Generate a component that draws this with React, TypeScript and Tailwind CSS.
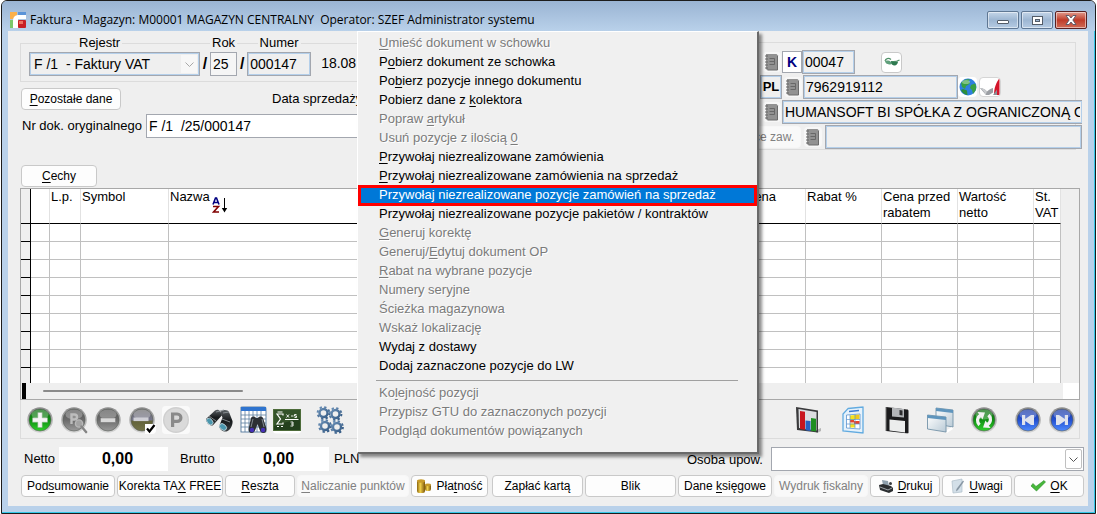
import React from 'react';
import clsx from 'clsx';

type IconProps = { className?: string };

/* "&" marks the access key, as in native menus */
function Mnemonic({ text }: { text: string }) {
  const i = text.indexOf('&');
  if (i < 0) return <>{text}</>;
  return (
    <>
      {text.slice(0, i)}
      <span className="underline underline-offset-2">{text[i + 1]}</span>
      {text.slice(i + 2)}
    </>
  );
}

/* ---------- icons ---------- */

function Gradients() {
  return (
    <svg width="0" height="0" className="absolute" aria-hidden="true">
      <defs>
        <linearGradient id="green" x1="0" y1="0" x2="0" y2="1">
          <stop offset="0" stopColor="#0c6b10" />
          <stop offset="0.5" stopColor="#0f8f12" />
          <stop offset="1" stopColor="#2fd02a" />
        </linearGradient>
        <linearGradient id="gray" x1="0" y1="0" x2="0" y2="1">
          <stop offset="0" stopColor="#565656" />
          <stop offset="0.5" stopColor="#6b6b6b" />
          <stop offset="1" stopColor="#9a9a9a" />
        </linearGradient>
        <linearGradient id="olive" x1="0" y1="0" x2="0" y2="1">
          <stop offset="0" stopColor="#6c6c6c" />
          <stop offset="0.5" stopColor="#76768c" />
          <stop offset="0.55" stopColor="#63633a" />
          <stop offset="1" stopColor="#74744a" />
        </linearGradient>
        <linearGradient id="blue" x1="0" y1="0" x2="0" y2="1">
          <stop offset="0" stopColor="#1b3aa0" />
          <stop offset="0.5" stopColor="#2450cf" />
          <stop offset="1" stopColor="#4d8bff" />
        </linearGradient>
        <linearGradient id="rim" x1="0" y1="0" x2="0" y2="1">
          <stop offset="0" stopColor="#8c8c8c" />
          <stop offset="1" stopColor="#d6d6d6" />
        </linearGradient>
        <linearGradient id="gold" x1="0" y1="0" x2="1" y2="0">
          <stop offset="0" stopColor="#8a6410" />
          <stop offset="0.4" stopColor="#f3d24a" />
          <stop offset="1" stopColor="#7a540a" />
        </linearGradient>
        <linearGradient id="steel" gradientUnits="userSpaceOnUse" x1="-6" y1="-6" x2="6" y2="6">
          <stop offset="0" stopColor="#6f94bb" />
          <stop offset="1" stopColor="#2f557f" />
        </linearGradient>
        <linearGradient id="lens" x1="0" y1="0" x2="0" y2="1">
          <stop offset="0" stopColor="#5b6064" />
          <stop offset="0.5" stopColor="#15181a" />
          <stop offset="1" stopColor="#3b4044" />
        </linearGradient>
        <linearGradient id="pane" x1="0" y1="0" x2="1" y2="1">
          <stop offset="0" stopColor="#ffffff" />
          <stop offset="1" stopColor="#b9cad6" />
        </linearGradient>
      </defs>
    </svg>
  );
}

function Orb({ fill, children }: { fill: string; children?: React.ReactNode }) {
  return (
    <svg viewBox="0 0 28 28" className="size-7">
      <circle cx="14" cy="14" r="12.8" fill="url(#rim)" />
      <circle cx="14" cy="14" r="11" fill={fill} stroke="#5b5f5b" strokeWidth="0.6" />
      <ellipse cx="14" cy="8.5" rx="8.5" ry="5" fill="#fff" opacity="0.28" />
      {children}
    </svg>
  );
}

const AddIcon = () => (
  <Orb fill="url(#green)">
    <path d="M11.8 6.5h4.4v5.3h5.3v4.4h-5.3v5.3h-4.4v-5.3H6.5v-4.4h5.3z" fill="#f4f4f4" stroke="#8bb08b" strokeWidth="0.5" />
  </Orb>
);

const SearchItemIcon = () => (
  <Orb fill="url(#gray)">
    <path d="M11.500 18V8.500h3a2.500 2.500 0 010 5h-3" fill="none" stroke="#bdbdbd" strokeWidth="2.400" />
    <circle cx="19" cy="17.5" r="3.6" fill="#a3a3a3" stroke="#b8b8b8" strokeWidth="1.4" />
    <path d="M21.5 20.5l5 6" stroke="#858585" strokeWidth="2.4" strokeLinecap="round" />
  </Orb>
);

const RemoveIcon = () => (
  <Orb fill="url(#gray)">
    <rect x="6.5" y="12" width="15" height="4.4" fill="#d9d9d9" stroke="#777" strokeWidth="0.5" />
  </Orb>
);

const RemoveCheckedIcon = () => (
  <Orb fill="url(#olive)">
    <rect x="5.5" y="11.5" width="15" height="3.6" fill="#cfcfd6" />
    <rect x="17" y="18" width="11" height="10" fill="#fff" />
    <path d="M19 22.5l2.5 3L26.5 19" fill="none" stroke="#000" strokeWidth="2.2" />
  </Orb>
);

const ParkingIcon = () => (
  <svg viewBox="0 0 28 28" className="size-7">
    <rect width="28" height="28" fill="#fafafa" />
    <circle cx="14" cy="14" r="13" fill="#cfcfcf" />
    <circle cx="14" cy="14" r="11.6" fill="#dadada" />
    <path d="M10.6 21V8h4.6a3.6 3.6 0 010 7.4h-4.6" fill="none" stroke="#8a8a8a" strokeWidth="3.2" />
  </svg>
);

const BinocularsIcon = () => (
  <svg viewBox="0 0 28 28" className="size-7">
    <path d="M1 13L10 4.5c2-1.4 4-.8 5 .8l2 4-9 10c-2 1.300-7-2-7-6.300z" fill="url(#lens)" />
    <path d="M15 6c3-3 8-2.500 9 0l3.500 9c.6 4-2.500 10-6 10.500-4 .5-8-3-7-6l3-8z" fill="url(#lens)" />
    <path d="M11 6l8-2M18 7l6-1M4 10l7 5M17 13l8 3" stroke="#8d9499" strokeWidth="0.9" />
    <ellipse cx="4.800" cy="15.500" rx="2.600" ry="3.900" transform="rotate(-40 4.800 15.500)" fill="#4a96ad" stroke="#c4d6dc" strokeWidth="0.8" />
    <ellipse cx="18" cy="21" rx="2.800" ry="4" transform="rotate(-50 18 21)" fill="#4a96ad" stroke="#c4d6dc" strokeWidth="0.8" />
  </svg>
);

const TableSearchIcon = () => (
  <svg viewBox="0 0 28 28" className="size-7">
    <rect x="2" y="1" width="25" height="25" fill="#fff" stroke="#3c6791" strokeWidth="0.8" />
    <rect x="2" y="1" width="25" height="4" fill="#2f74cf" />
    <path d="M2 9h25M2 13h25M2 17h25M2 21h25M6 5v21M10 5v21M14 5v21M18 5v21M22 5v21" stroke="#5b7f9e" strokeWidth="0.8" />
    <path d="M12 12c1-2 4-2 5 0h2c1-2 4-2 5 0l3 9c1 3 0 6-2.500 6S21 25 20 22l-1.500-4-1.500 4c-1 3-2 5-4.500 5S9 24 10 21z" fill="#2c3034" />
    <path d="M14 13l-2 8M23 13l2 8" stroke="#838a90" />
    <circle cx="13" cy="24" r="2.200" fill="#4530b8" />
    <circle cx="24" cy="24" r="2.200" fill="#4530b8" />
  </svg>
);

const FormulaIcon = () => (
  <svg viewBox="0 0 28 28" className="size-7">
    <rect x="0" y="25" width="28" height="2.500" fill="#fff" />
    <rect x="0.500" y="3.500" width="27" height="21" fill="#23401d" stroke="#4d6b3a" />
    <path d="M1 4h26v8L1 20z" fill="#3f6133" opacity="0.600" />
    <path d="M10 9.500V8H4l3.500 5L4 18h6v-1.500M4 20.500h2M8 20.500h2M4.500 6h5" fill="none" stroke="#fff" strokeWidth="1.200" />
    <path d="M12 13.500h13.500" stroke="#fff" strokeWidth="1.200" />
    <path d="M13.500 8.500l2.500 3m0-3l-2.500 3M18 10h2.500M23.500 8.500h-2v1.500h2v1.500h-2M17.500 16h2.500v4h-2.500M18 18h2" fill="none" stroke="#fff" strokeWidth="0.900" />
  </svg>
);

function Cog({ x, y }: { x: number; y: number }) {
  return (
    <g transform={`translate(${x} ${y})`} fill="none" stroke="url(#steel)">
      <circle r="4" strokeWidth="2.400" />
      <circle r="5.900" strokeWidth="2" strokeDasharray="2.300 2.330" />
    </g>
  );
}

const GearsIcon = () => (
  <svg viewBox="0 0 28 28" className="size-7">
    <Cog x={7.5} y={7} />
    <Cog x={19.5} y={8} />
    <Cog x={9} y={20} />
    <Cog x={21} y={21} />
  </svg>
);

const ChartIcon = () => (
  <svg viewBox="0 0 28 28" className="size-7">
    <path d="M20 25l7-3v3l-4 2z" fill="#b5b5b5" />
    <path d="M2 1l22 3.500v22L3 24z" fill="#3a3a3c" />
    <path d="M4.500 3l18 3v18.500L5 22z" fill="#dcdde0" />
    <path d="M6 5l5 .8v18L6 23z" fill="#c9151e" />
    <path d="M11.500 14.500l5 .5v10l-5-.7z" fill="#2a63c4" />
    <path d="M17 12l5 .7V25.500l-5-.7z" fill="#1f8f22" />
  </svg>
);

const SheetIcon = () => (
  <svg viewBox="0 0 28 28" className="size-7">
    <path d="M10 2.500L25 1v26l-20-2V8z" fill="#e6f2fb" stroke="#62abe0" strokeWidth="1.300" />
    <path d="M8.500 9l13.500-1v15L8.500 22z" fill="#fff" stroke="#5a93cf" strokeWidth="0.800" />
    <path d="M11 5.500l10-1" stroke="#3b7bd0" strokeWidth="1.600" />
    <path d="M12 9.500l5-.5v5h-5zM12 17.500h5v4h-5z" fill="#f7e21c" />
    <path d="M17 9l4.500-.5V13H17z" fill="#f2c81e" />
    <path d="M16 15h5.500v3H16zM12 14h4v2.500h-4z" fill="#e8452a" />
    <path d="M8.500 13.500H22M8.500 18H22M12 9v13M17 8.500V22" stroke="#5a93cf" strokeWidth="0.700" />
  </svg>
);

const SaveIcon = () => (
  <svg viewBox="0 0 28 28" className="size-7">
    <path d="M4 1l21 2.500c1 0 1.500.6 1.500 1.500v22.500L4 25z" fill="#1b1b1d" />
    <path d="M10 1.600l12 1.500v8.500L10 10.500z" fill="#b3b5b8" />
    <path d="M17.500 4l3 .4v5l-3-.4z" fill="#2c2c2e" />
    <path d="M7.500 13.500L23 15v11.500L7.500 24.500z" fill="#eceded" />
    <path d="M4 1v24" stroke="#777" />
  </svg>
);

const WindowsIcon = () => (
  <svg viewBox="0 0 28 28" className="size-7">
    <path d="M10 2l17 2v17L10 18z" fill="url(#pane)" stroke="#7593a8" strokeWidth="0.900" />
    <path d="M10 2l17 2v3L10 5z" fill="#5f95bd" />
    <path d="M1.500 9L20 11v15L1.500 23z" fill="url(#pane)" stroke="#7593a8" strokeWidth="0.900" />
    <path d="M1.500 9L20 11v3L1.500 12z" fill="#5f95bd" />
    <path d="M21 27l6-4-1-2-5 3z" fill="#fff" />
  </svg>
);

const RefreshIcon = () => (
  <Orb fill="url(#green)">
    <path d="M9.500 19c-3-3-2.500-7.500 1-9.500" fill="none" stroke="#f2f2f2" strokeWidth="3.200" />
    <path d="M7.500 6l7.500.5-2.500 7z" fill="#f2f2f2" />
    <path d="M18.500 9c3 3 2.500 7.500-1 9.500" fill="none" stroke="#f2f2f2" strokeWidth="3.200" />
    <path d="M20.500 22l-7.500-.5 2.500-7z" fill="#f2f2f2" />
  </Orb>
);

const FirstIcon = () => (
  <Orb fill="url(#blue)">
    <path d="M8 9h3.200v4L17 9h3v10h-3l-5.800-4v4H8z" fill="#dfe3ec" />
  </Orb>
);

const LastIcon = () => (
  <Orb fill="url(#blue)">
    <path d="M20 9h-3.200v4L11 9H8v10h3l5.800-4v4H20z" fill="#dfe3ec" />
  </Orb>
);

const NotebookIcon = () => (
  <svg viewBox="0 0 16 18" className="h-[18px] w-4">
    <path d="M2 1h10.500L14 2.500V17H3L2 16z" fill="#929292" />
    <path d="M13.500 3v14H3.500" fill="none" stroke="#6c6c6c" />
    <path d="M5.500 5.500h5v6h-5M5.500 8.500h5" fill="none" stroke="#686868" />
    <path d="M1 3h3M1 6h3M1 9h3M1 12h3M1 15h3" stroke="#666" />
  </svg>
);

const GlassesIcon = () => (
  <svg viewBox="0 0 18 12" className="h-3 w-[18px]">
    <path d="M2 5C2.500 2.500 5.500 1.500 8 3.500M8 5.500c3 .5 6 0 8.500-1.500" fill="none" stroke="#4f9068" strokeWidth="1.200" />
    <path d="M2 5c2-.8 4.500-.5 6 1s1 2.500-1 2.500S2 7.500 2 5z" fill="#5f9f7b" />
    <path d="M8 5.500c2 .5 4.500.5 7 0 0 2-1.500 4-3.500 4S8 8 8 5.500z" fill="#2e7a50" />
  </svg>
);

const GlobeIcon = () => (
  <svg viewBox="0 0 18 18" className="size-[18px]">
    <circle cx="9" cy="9" r="8.500" fill="#2f7fe0" />
    <path d="M2 5c2-3 6-4.500 9-3.500l-1.500 2 2 1L9 7l-2 1-1 3-3-2zM12 7l4-1.500c1.500 2 1.500 5 .5 7L14 16l-1-4-2-2z" fill="#39a043" />
    <path d="M4 11l4 1.500L8.500 17C6 17 3 14.500 2 12z" fill="#2d8f3a" />
    <ellipse cx="7" cy="4" rx="4" ry="2" fill="#fff" opacity="0.350" />
  </svg>
);

const RegistryIcon = () => (
  <svg viewBox="0 0 20 18" className="h-[18px] w-5">
    <path d="M0 10c3 0 5 1.500 7 3.500 2-2 4-3 6-3.500v4.500L9 17H6z" fill="#9b9ea3" />
    <path d="M0 10c3 0 5 1.500 7 3.500L5.500 17C4.500 14 2.500 11.500 0 10z" fill="#c9cbce" />
    <path d="M19.500 0v17H14c0-7 2-12 5.500-17z" fill="#d4142a" />
    <path d="M13 17l4-5.500V17z" fill="#8d9095" />
  </svg>
);

const LogoIcon = () => (
  <svg viewBox="0 0 16 16" className="size-4">
    <path d="M0 0h7v3L3 7H0z" fill="#fbb04a" />
    <path d="M8 0h8v3H8z" fill="#5b94d8" />
    <path d="M0 8h3v8H0z" fill="#7bc86c" />
    <path d="M3 16V9c0-4 2-6 6-6h7v4H8v9z" fill="#fff" />
    <rect x="8" y="8" width="8" height="8" rx="1" fill="#c81f25" />
    <rect x="9" y="9" width="4" height="3" fill="#ee6f60" />
  </svg>
);

const SortIcon = () => (
  <svg viewBox="0 0 16 16" className="mt-2 ml-0.5 size-4">
    <path d="M1 7.500L3.500 1h1L7 7.500M2.500 5.500h3" fill="none" stroke="#000080" strokeWidth="1.600" />
    <path d="M1 9.500h5.500L1.500 15H7" fill="none" stroke="#800000" strokeWidth="1.600" />
    <path d="M12.500 1v12" stroke="#000" />
    <path d="M9.800 11h5.400l-2.700 4.500z" fill="#000" />
  </svg>
);

const CoinsIcon = () => (
  <svg viewBox="0 0 16 16" className="size-4">
    <rect x="1" y="2" width="8" height="13" rx="2" fill="url(#gold)" />
    <ellipse cx="5" cy="3" rx="4" ry="1.800" fill="#c79a28" />
    <rect x="9" y="6" width="6" height="7" rx="2" fill="url(#gold)" />
    <ellipse cx="12" cy="6.800" rx="3" ry="1.400" fill="#c79a28" />
  </svg>
);

const PrinterIcon = () => (
  <svg viewBox="0 0 16 14" className="h-3.5 w-4">
    <path d="M4 1l6 1 1 5-6-1z" fill="#8fa0ad" />
    <path d="M1 6l4-1 8 2 2 2v3l-4 2-9-3z" fill="#2b2e31" />
    <path d="M2 8l8 3 4-2" fill="none" stroke="#9fa6ab" />
    <circle cx="12.500" cy="4.500" r="1.500" fill="#3a3d40" />
  </svg>
);

const NoteIcon = () => (
  <svg viewBox="0 0 14 16" className="h-4 w-3.5">
    <path d="M1 3l10-2v13L2 15z" fill="#d3dfe8" stroke="#aebdc9" strokeWidth="0.700" />
    <path d="M13 3.500L7 12l-2 1.500L5.500 11 12 2.500z" fill="#8796a3" />
  </svg>
);

const CheckIcon = () => (
  <svg viewBox="0 0 16 12" className="h-3 w-4">
    <path d="M1 6l2-2.500 3 3L14 .5 15.500 2 6.500 11z" fill="#46b83a" stroke="#2c8a2a" strokeWidth="0.600" />
  </svg>
);

const ChevronIcon = ({ className }: IconProps) => (
  <svg viewBox="0 0 9 5" className={clsx('h-[5px] w-[9px]', className)}>
    <path d="M0.500 0.500l4 4 4-4" fill="none" stroke="currentColor" />
  </svg>
);

/* ---------- controls ---------- */

const field = 'h-6 border border-[#a3a7af] px-0.5 text-sm text-black outline-none';
const locked = 'bg-[#efefef] shadow-[inset_0_0_0_1px_#b4cfea]';

function Button({ label, icon, className, disabled }: { label: string; icon?: React.ReactNode; className?: string; disabled?: boolean }) {
  return (
    <button
      type="button"
      disabled={disabled}
      className={clsx(
        'flex h-[22px] min-w-0 items-center justify-center gap-1 rounded border text-xs whitespace-nowrap',
        disabled ? 'border-[#f7f7f7] bg-[#f9f9f9] text-[#808080]' : 'border-[#c9c9c9] bg-[#fdfdfd]',
        className,
      )}
    >
      {icon}
      <span>
        <Mnemonic text={label} />
      </span>
    </button>
  );
}

function IconButton({ label, children, className }: { label: string; children: React.ReactNode; className?: string }) {
  return (
    <button type="button" aria-label={label} className={clsx('flex items-center justify-center overflow-hidden rounded', className)}>
      {children}
    </button>
  );
}

const NotebookButton = ({ label }: { label: string }) => (
  <IconButton label={label} className="h-5 w-[18px] bg-[#f7f7f7]">
    <NotebookIcon />
  </IconButton>
);

/* ---------- title bar ---------- */

function TitleBar() {
  const btn = 'flex h-[18px] w-8 items-center justify-center rounded-[2px] border shadow-[inset_0_0_0_1px_rgba(255,255,255,0.5)]';
  return (
    <header className="flex h-[30px] items-center bg-gradient-to-b from-[#9ab4d3] to-[#b9d1ea] px-2 pt-2">
      <LogoIcon />
      <h1 className="ml-1 flex-1 font-['Open_Sans','Noto_Sans',sans-serif] text-xs whitespace-pre">
        Faktura - Magazyn: M00001 MAGAZYN CENTRALNY{'  '}Operator: SZEF Administrator systemu
      </h1>
      <div className="flex gap-0.5">
        <button type="button" aria-label="Minimalizuj" className={clsx(btn, 'border-[#5f7793] bg-gradient-to-b from-[#c4d5e8] via-[#9db6d2] to-[#b5cbe3]')}>
          <span className="mt-1 h-1 w-3 rounded-[1px] border border-[#535c68] bg-white" />
        </button>
        <button type="button" aria-label="Maksymalizuj" className={clsx(btn, 'border-[#5f7793] bg-gradient-to-b from-[#c4d5e8] via-[#9db6d2] to-[#b5cbe3]')}>
          <svg viewBox="0 0 11 9" className="h-[9px] w-[11px]">
            <rect x="0.500" y="0.500" width="10" height="8" fill="#fff" stroke="#535c68" />
            <rect x="3.500" y="3.500" width="4" height="2" fill="#9db6d2" stroke="#535c68" />
          </svg>
        </button>
        <button type="button" aria-label="Zamknij" className={clsx(btn, 'border-[#5a2020] bg-gradient-to-b from-[#e0998c] via-[#bf3a28] to-[#cf6a55]')}>
          <svg viewBox="0 0 12 10" className="h-2.5 w-3">
            <path d="M1 .5h3l2 2.500L8 .5h3L7.800 5 11 9.500H8L6 7 4 9.500H1L4.200 5z" fill="#fff" stroke="#535666" strokeWidth="0.900" />
          </svg>
        </button>
      </div>
    </header>
  );
}

/* ---------- document header ---------- */

function DocumentForm() {
  const caption = '-mt-[9px] mb-px bg-[#efefef] px-0.5 text-[13px] leading-4';
  return (
    <div className="min-w-0 flex-1 pt-3">
      <div className="flex h-[39px] items-start border border-[#dcdcdc] pl-2">
        <div className="flex flex-col">
          <label htmlFor="rejestr" className={clsx(caption, 'ml-12 self-start')}>Rejestr</label>
          <div className="relative">
            <select id="rejestr" disabled className={clsx(field, locked, 'w-[171px] appearance-none pl-1 opacity-100')}>
              <option>F /1 &nbsp;- Faktury VAT</option>
            </select>
            <span className="pointer-events-none absolute top-[3px] right-[3px] flex h-[18px] w-4 items-center justify-center bg-[#f7f7f7] text-[#a8a8a8]">
              <ChevronIcon />
            </span>
          </div>
        </div>
        <span className="mt-2 w-2.5 text-center text-base leading-6 font-bold">/</span>
        <div className="flex flex-col items-center">
          <label htmlFor="rok" className={caption}>Rok</label>
          <input id="rok" defaultValue="25" className={clsx(field, 'w-[27px] bg-[#f5f5f5]')} />
        </div>
        <span className="mt-2 w-2.5 text-center text-base leading-6 font-bold">/</span>
        <div className="flex flex-col items-center">
          <label htmlFor="numer" className={caption}>Numer</label>
          <input id="numer" defaultValue="000147" className={clsx(field, locked, 'w-16')} />
        </div>
        <span className="mt-[7px] ml-2.5 text-sm leading-6">18.08</span>
      </div>

      <div className="mt-1.5 flex items-center pl-px">
        <Button label="&Pozostałe dane" className="w-[100px]" />
        <span className="ml-auto w-[444px] text-[13px]">Data sprzedaży</span>
      </div>

      <div className="mt-1 flex items-center pl-0.5">
        <label htmlFor="nr-dok" className="w-[124px] text-[13px] whitespace-nowrap">Nr dok. oryginalnego</label>
        <input id="nr-dok" defaultValue="F /1  /25/000147" className={clsx(field, 'min-w-0 flex-1 bg-white')} />
      </div>

      <Button label="&Cechy" className="mt-[27px] mb-px ml-px w-[76px]" />
    </div>
  );
}

function Customer() {
  return (
    <div className="mt-[11px] mr-2 flex h-[108px] w-[360px] shrink-0 flex-col gap-px border border-l-0 border-[#dcdcdc] pt-[7px]">
      <div className="flex h-6 items-center pl-[47px]">
        <NotebookButton label="Wybierz kontrahenta" />
        <span className="ml-px h-[22px] w-5 border border-[#a3a7af] bg-white text-center text-sm leading-5 font-bold text-[#000080]">K</span>
        <input aria-label="Kod" defaultValue="00047" className={clsx(field, locked, 'w-[53px]')} />
        <IconButton label="Podgląd" className="ml-[26px] size-[21px] border border-[#c9c9c9] bg-white">
          <GlassesIcon />
        </IconButton>
      </div>
      <div className="flex h-6 items-center pl-[44px]">
        <span className={clsx('h-6 w-[22px] border border-[#a3a7af] text-center text-[13px] leading-[22px] font-bold', locked)}>PL</span>
        <span className="ml-0.5">
          <NotebookButton label="Wybierz NIP" />
        </span>
        <input aria-label="NIP" defaultValue="7962919112" className={clsx(field, locked, 'ml-px w-[155px]')} />
        <IconButton label="Sprawdź w VIES" className="h-5 w-[19px] bg-white">
          <GlobeIcon />
        </IconButton>
        <IconButton label="Pobierz z rejestru" className="ml-0.5 h-5 w-[22px] border border-[#d5d5d5] bg-white">
          <RegistryIcon />
        </IconButton>
      </div>
      <div className="-mr-[7px] flex h-6 items-center pl-[47px]">
        <NotebookButton label="Wybierz nazwę" />
        <input aria-label="Nazwa kontrahenta" defaultValue="HUMANSOFT BI SPÓŁKA Z OGRANICZONĄ ODPOWIEDZIALNOŚCIĄ" className={clsx(field, locked, 'ml-px min-w-0 flex-1 border-r-0')} />
      </div>
      <div className="-mr-[7px] flex h-6 items-center">
        <Button label="Konto obce zaw." disabled className="ml-px w-[84px] justify-end pr-1.5" />
        <span className="mx-[3px]">
          <NotebookButton label="Wybierz konto" />
        </span>
        <input aria-label="Konto" className={clsx(field, locked, 'min-w-0 flex-1')} />
      </div>
    </div>
  );
}

/* ---------- items table ---------- */

const columns = [
  { label: '', width: 'w-[19px]' },
  { label: 'L.p.', width: 'w-[31px]' },
  { label: 'Symbol', width: 'w-[88px]' },
  { label: 'Nazwa', width: '', sorted: true },
  { label: 'Cena', width: 'w-[62px]' },
  { label: 'Rabat %', width: 'w-[76px]' },
  { label: 'Cena przed rabatem', width: 'w-[76px]' },
  { label: 'Wartość netto', width: 'w-[76px]' },
  { label: 'St. VAT', width: 'w-[27px]' },
];

const ROWS = 9;

function ItemsTable() {
  return (
    <section className="mr-1 border border-[#a8a8a8]">
      <div className="flex">
        <table className="min-w-0 flex-1 table-fixed border-separate border-spacing-0 bg-white text-[13px] leading-4">
          <thead>
            <tr className="h-[35px]">
              <th className="w-2.5 border-r border-b border-r-black border-b-black bg-[#efefef]" />
              {columns.map((col, i) => (
                <th key={i} className={clsx('border-r border-b border-r-[#e2e2e2] border-b-black p-0 pl-px text-left align-top font-normal', col.width)}>
                  {col.sorted ? <span className="flex">{col.label}<SortIcon /></span> : col.label}
                </th>
              ))}
            </tr>
          </thead>
          <tbody>
            {Array.from({ length: ROWS }, (_, r) => (
              <tr key={r} className={r === ROWS - 1 ? 'h-[15px]' : 'h-[18px]'}>
                <td className={clsx('border-r border-black bg-[#efefef] p-0', r < ROWS - 1 && 'border-b')} />
                {columns.map((_, i) => (
                  <td key={i} className={clsx('border-r border-[#c0c0c0] p-0', r < ROWS - 1 && 'border-b')} />
                ))}
              </tr>
            ))}
          </tbody>
        </table>
        <div className="w-[18px] bg-[#efefef]" />
      </div>
      <div className="flex h-4 items-center bg-[#efefef]">
        <span className="ml-px h-4 w-1 bg-black" />
        <span className="ml-[17px] h-0.5 w-[200px] rounded bg-[#8a8a8a]" />
        <span className="ml-auto h-4 w-4 bg-white" />
      </div>
    </section>
  );
}

/* ---------- toolbar and footer ---------- */

function Toolbar() {
  return (
    <div className="mr-1 flex h-[39px] items-center border border-t-0 border-[#dcdcdc] pt-0.5 pr-[3px] pl-[5px]">
      <div className="flex gap-1.5">
        <IconButton label="Dodaj"><AddIcon /></IconButton>
        <IconButton label="Popraw"><SearchItemIcon /></IconButton>
        <IconButton label="Usuń"><RemoveIcon /></IconButton>
        <IconButton label="Usuń zaznaczone"><RemoveCheckedIcon /></IconButton>
        <IconButton label="Promocje"><ParkingIcon /></IconButton>
      </div>
      <div className="ml-[15px] flex gap-1.5">
        <IconButton label="Szukaj"><BinocularsIcon /></IconButton>
        <IconButton label="Szukaj w tabeli"><TableSearchIcon /></IconButton>
        <IconButton label="Wyrażenie"><FormulaIcon /></IconButton>
      </div>
      <div className="ml-[15px] flex">
        <IconButton label="Operacje"><GearsIcon /></IconButton>
      </div>
      <div className="ml-auto flex gap-4">
        <IconButton label="Wykres"><ChartIcon /></IconButton>
        <IconButton label="Arkusz"><SheetIcon /></IconButton>
        <IconButton label="Zapisz"><SaveIcon /></IconButton>
        <IconButton label="Okna"><WindowsIcon /></IconButton>
        <IconButton label="Odśwież"><RefreshIcon /></IconButton>
        <div className="flex gap-1.5">
          <IconButton label="Pierwszy"><FirstIcon /></IconButton>
          <IconButton label="Ostatni"><LastIcon /></IconButton>
        </div>
      </div>
    </div>
  );
}

function Totals() {
  const amount = 'h-6 w-[109px] bg-white pl-2 text-center text-base leading-6 font-bold';
  return (
    <div className="mt-2 flex h-6 text-[13px]">
      <span className="ml-1 w-[35px] leading-6">Netto</span>
      <output className={amount}>0,00</output>
      <span className="ml-3 w-10 leading-6">Brutto</span>
      <output className={amount}>0,00</output>
      <span className="ml-[5px] leading-6">PLN</span>
      <label htmlFor="osoba" className="ml-auto w-[84px] leading-[26px]">Osoba upow.</label>
      <div className="relative w-[313px]">
        <select id="osoba" className={clsx(field, 'w-full appearance-none bg-white')}>
          <option></option>
        </select>
        <span className="pointer-events-none absolute top-0.5 right-0.5 flex h-5 w-[17px] items-center justify-center rounded-[2px] border border-[#c0c0c0] bg-white text-[#555]">
          <ChevronIcon />
        </span>
      </div>
    </div>
  );
}

function Actions() {
  return (
    <div className="mt-1 flex gap-0.5 pl-px">
      <Button label="Pod&sumowanie" className="grow basis-[94px]" />
      <Button label="Korekta TA&X FREE" className="grow basis-[106px]" />
      <Button label="&Reszta" className="grow basis-[70px]" />
      <Button label="&Naliczanie punktów" disabled className="grow basis-[112px]" />
      <Button label="Pła&tność" icon={<CoinsIcon />} className="grow basis-[77px]" />
      <Button label="Zapłać kartą" className="ml-0.5 grow basis-[91px]" />
      <Button label="Blik" className="grow basis-[91px]" />
      <Button label="Dane &księgowe" className="grow basis-[94px]" />
      <Button label="Wydruk &fiskalny" disabled className="grow basis-[94px]" />
      <Button label="&Drukuj" icon={<PrinterIcon />} className="grow basis-[70px]" />
      <Button label="&Uwagi" icon={<NoteIcon />} className="grow basis-[70px]" />
      <Button label="&OK" icon={<CheckIcon />} className="grow basis-[70px]" />
    </div>
  );
}

/* ---------- context menu ---------- */

type MenuEntry = { label: string; off?: boolean; active?: boolean };

const mainEntries: MenuEntry[] = [
  { label: '&Umieść dokument w schowku', off: true },
  { label: 'P&obierz dokument ze schowka' },
  { label: 'Po&bierz pozycje innego dokumentu' },
  { label: 'Pobierz dane z &kolektora' },
  { label: 'Popraw &artykuł', off: true },
  { label: 'Usuń pozycje z ilością &0', off: true },
  { label: '&Przywołaj niezrealizowane zamówienia' },
  { label: '&Przywołaj niezrealizowane zamówienia na sprzedaż' },
  { label: 'Przywołaj niezrealizowane pozycje zamówień na sprzedaż', active: true },
  { label: 'Przywołaj niezrealizowane pozycje pakietów / kontraktów' },
  { label: '&Generuj korektę', off: true },
  { label: 'Generuj/&Edytuj dokument OP', off: true },
  { label: '&Rabat na wybrane pozycje', off: true },
  { label: 'Numery seryjne', off: true },
  { label: 'Ścieżka magazynowa', off: true },
  { label: 'Wskaż lokalizację', off: true },
  { label: 'Wydaj z dostawy' },
  { label: 'Dodaj zaznaczone pozycje do LW' },
];

const extraEntries: MenuEntry[] = [
  { label: 'Ko&lejność pozycji', off: true },
  { label: 'Przypisz GTU do zaznaczonych pozycji', off: true },
  { label: 'Podgląd dokumentów powiązanych', off: true },
];

function MenuItem({ label, off, active }: MenuEntry) {
  return (
    <button
      type="button"
      role="menuitem"
      disabled={off}
      className={clsx(
        'block h-[19px] pb-0.5 pl-5 text-left text-[13px] leading-[17px] whitespace-nowrap',
        off && 'text-[#7b7b7b] [text-shadow:1px_1px_0_#fff]',
        active && 'bg-[#0078d7] text-white outline-3 -outline-offset-2 outline-[#f00]',
      )}
    >
      <Mnemonic text={label} />
    </button>
  );
}

function ContextMenu() {
  return (
    <div
      role="menu"
      className="absolute top-0 left-[349px] z-10 flex w-[402px] flex-col border-t border-r-2 border-b-2 border-l border-t-white border-r-[#696969] border-b-[#696969] border-l-white bg-[#f0f0f0] px-px pt-0.5 pb-[11px] shadow-[3px_3px_3px_rgba(0,0,0,0.45)]"
    >
      {mainEntries.map((entry) => (
        <MenuItem key={entry.label} {...entry} />
      ))}
      <hr className="mt-1 mr-[18px] mb-[3px] ml-[17px] border-[#a0a0a0]" />
      {extraEntries.map((entry) => (
        <MenuItem key={entry.label} {...entry} />
      ))}
    </div>
  );
}

export default function App() {
  return (
    <div className="bg-white px-px font-['Liberation_Sans',Arial,sans-serif] text-black">
      <Gradients />
      <div className="overflow-hidden rounded-t-md border border-[#1c1c1c] bg-[#b9d1ea]">
        <TitleBar />
        <div className="border-r border-b border-[#35c8e8] px-1.5 pb-1.5">
          <main className="relative bg-[#efefef] pr-1 pb-[9px] pl-3">
            <div className="flex">
              <DocumentForm />
              <Customer />
            </div>
            <ItemsTable />
            <Toolbar />
            <Totals />
            <Actions />
            <ContextMenu />
          </main>
        </div>
      </div>
    </div>
  );
}
